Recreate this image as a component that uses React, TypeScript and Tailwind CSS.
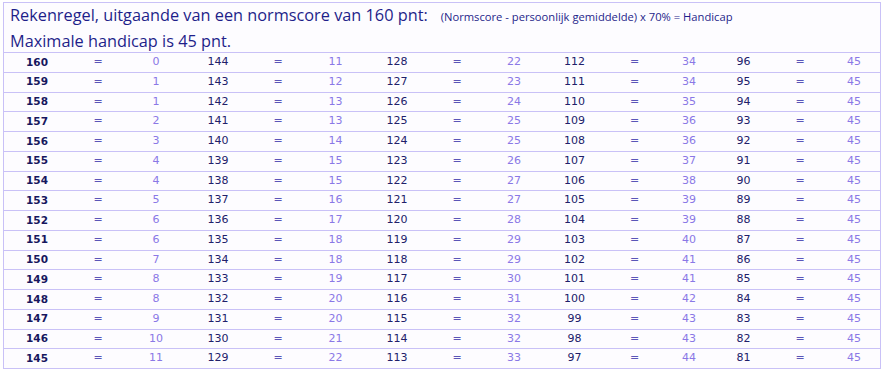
const hc = (d: number) => Math.min(45, Math.floor((d * 7 + 5) / 10))

const starts = [160, 144, 128, 112, 96]

export default function App() {
  const rows = Array.from({ length: 16 }, (_, i) => i)

  return (
    <div className="w-[890px] h-[373px] bg-white pt-[2px] pl-[3px]">
      <div className="w-[878px] border border-[#c9c1f7] bg-[#fdfcff]">
        <div className="h-[49px] pl-[6px] text-[#1f1f8a] font-['Open_Sans',sans-serif] leading-[25px]">
          <div className="flex items-baseline">
            <span className="text-[16.3px]">Rekenregel, uitgaande van een normscore van 160 pnt:</span>
            <span className="text-[11.2px] ml-[13px]">(Normscore - persoonlijk gemiddelde) x 70% = Handicap</span>
          </div>
          <div className="text-[16.3px]">Maximale handicap is 45 pnt.</div>
        </div>
        {rows.map(i => (
          <div
            key={i}
            className="grid grid-cols-[66px_56px_60px_64px_56px_59px_64px_56px_58px_63px_57px_52px_57px_56px_52px] h-[19.75px] items-center border-t border-[#c9c1f7] text-[11px] font-['DejaVu_Sans',sans-serif] text-center"
          >
            {starts.map((s, k) => {
              const score = s - i
              return [
                <span
                  key={`n${k}`}
                  className={k === 0 ? 'font-bold text-[10.5px] text-[#17175e]' : 'text-[#20206a]'}
                >
                  {score}
                </span>,
                <span key={`e${k}`} className="text-[#5a55b8]">=</span>,
                <span key={`v${k}`} className="text-[#8a78e6]">{hc(160 - score)}</span>,
              ]
            })}
          </div>
        ))}
      </div>
    </div>
  )
}
